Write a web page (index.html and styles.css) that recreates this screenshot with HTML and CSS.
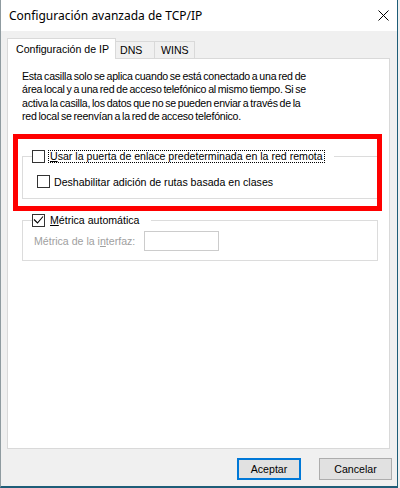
FILE: index.html
```html
<!DOCTYPE html>
<html lang="es">
<head>
<meta charset="utf-8">
<title>Configuración avanzada de TCP/IP</title>
<link rel="stylesheet" href="styles.css">
</head>
<body>
<div class="window">
  <div class="titlebar">
    <span class="title">Configuración avanzada de TCP/IP</span>
    <svg class="close" width="11" height="11" viewBox="0 0 11 11"><path d="M0.5 0.5L10.5 10.5M10.5 0.5L0.5 10.5" stroke="#000" stroke-width="1" fill="none"/></svg>
  </div>
  <div class="main">
    <div class="tabs">
      <div class="tab active">Configuración de IP</div>
      <div class="tab t-dns">DNS</div>
      <div class="tab t-wins">WINS</div>
    </div>
    <div class="panel">
      <p class="info">Esta casilla solo se aplica cuando se está conectado a una red de<br>área local y a una red de acceso telefónico al mismo tiempo. Si se<br>activa la casilla, los datos que no se pueden enviar a través de la<br>red local se reenvían a la red de acceso telefónico.</p>
      <fieldset class="group g1">
        <legend><span class="chk"><span class="cb"></span><span class="lbl focus"><u>U</u>sar la puerta de enlace predeterminada en la red remota</span></span></legend>
        <div class="row sub"><span class="cb"></span><span>Deshabilitar adición de rutas basada en clases</span></div>
      </fieldset>
      <fieldset class="group g2">
        <legend><span class="chk"><span class="cb checked"><svg width="11" height="11" viewBox="0 0 11 11"><path d="M1 4.5L4.5 8L10 1.5" stroke="#000" stroke-width="1.1" fill="none"/></svg></span><span class="lbl"><u>M</u>étrica automática</span></span></legend>
        <div class="row metric"><span>Métrica de la i<u>n</u>terfaz:</span><span class="input"></span></div>
      </fieldset>
      <div class="highlight"></div>
    </div>
    <div class="buttons">
      <div class="btn ok">Aceptar</div>
      <div class="btn cancel">Cancelar</div>
    </div>
  </div>
</div>
</body>
</html>
```
FILE: styles.css
```css
* { box-sizing: border-box; }
html, body { margin: 0; padding: 0; }
body {
  width: 400px;
  height: 488px;
  background: #f0f0f0;
  font-family: "Liberation Sans", Arial, sans-serif;
  font-size: 10.6px;
  color: #000;
  overflow: hidden;
}
.window {
  width: 398px;
  height: 488px;
  background: #f0f0f0;
  border-left: 1px solid #8f9ba0;
  border-right: 1px solid #1e5d78;
  border-bottom: 2px solid #1e5d78;
  display: flex;
  flex-direction: column;
}
.titlebar {
  height: 31px;
  flex: none;
  background: #fff;
  display: flex;
  align-items: center;
  justify-content: space-between;
  padding: 0 8px 0 8px;
}
.title {
  font-family: "Noto Sans", sans-serif;
  font-size: 12px;
}
.close { display: block; }
.main {
  flex: 1;
  padding: 7px 7px 0 6px;
  display: flex;
  flex-direction: column;
}
.tabs {
  display: flex;
  align-items: flex-end;
  height: 20px;
  flex: none;
}
.tab {
  height: 17px;
  border: 1px solid #d9d9d9;
  border-bottom: none;
  background: #f0f0f0;
  line-height: 16px;
  white-space: nowrap;
}
.tab.active {
  height: 21px;
  width: 109px;
  padding-left: 8px;
  line-height: 20px;
  background: #fff;
  margin-bottom: -1px;
  position: relative;
  z-index: 1;
}
.t-dns { width: 39px; padding-left: 4px; border-left: none; }
.t-wins { width: 40px; padding-left: 6px; border-left: none; }
.panel {
  height: 391px;
  flex: none;
  border: 1px solid #d9d9d9;
  background: #fff;
  padding: 11px 11px 0 14px;
  position: relative;
}
.info {
  margin: 0;
  line-height: 13.33px;
  letter-spacing: -0.25px;
  word-spacing: -0.8px;
  white-space: nowrap;
}
.group {
  margin: 0;
  padding: 0 9px 10px 9px;
  border: 1px solid #dcdcdc;
  min-width: 0;
}
.g1 { margin-top: 27px; }
.g2 { margin-top: 15px; padding-bottom: 9px; }
legend {
  padding: 0 9px 0 0;
  line-height: 13px;
}
.chk {
  display: inline-flex;
  align-items: center;
  height: 13px;
  vertical-align: top;
}
.cb {
  width: 13px;
  height: 13px;
  border: 1px solid #333;
  background: #fff;
  display: inline-block;
  flex: none;
}
.cb svg { display: block; }
.lbl {
  margin-left: 3px;
  border: 1px solid transparent;
  padding: 0 1px;
  line-height: 11px;
}
.focus { border: 1px dotted #000; }
.row {
  display: flex;
  align-items: center;
}
.sub {
  height: 13px;
  margin: 12px 0 0 5px;
  gap: 4px;
}
.metric {
  height: 20px;
  margin: 4px 0 0 2px;
  gap: 9px;
  color: #a0a0a0;
}
.input {
  width: 75px;
  height: 20px;
  border: 1px solid #cccccc;
  background: #fff;
}
.highlight {
  position: absolute;
  left: 5px;
  top: 75px;
  width: 369px;
  height: 77px;
  border: 5px solid #ff0000;
}
.buttons {
  display: flex;
  justify-content: flex-end;
  gap: 18px;
  margin: 9px -2px 0 0;
}
.btn {
  height: 22px;
  background: #e1e1e1;
  border: 1px solid #adadad;
  display: flex;
  align-items: center;
  justify-content: center;
}
.btn.ok { width: 64px; border: 2px solid #0078d7; }
.btn.cancel { width: 73px; }
```
